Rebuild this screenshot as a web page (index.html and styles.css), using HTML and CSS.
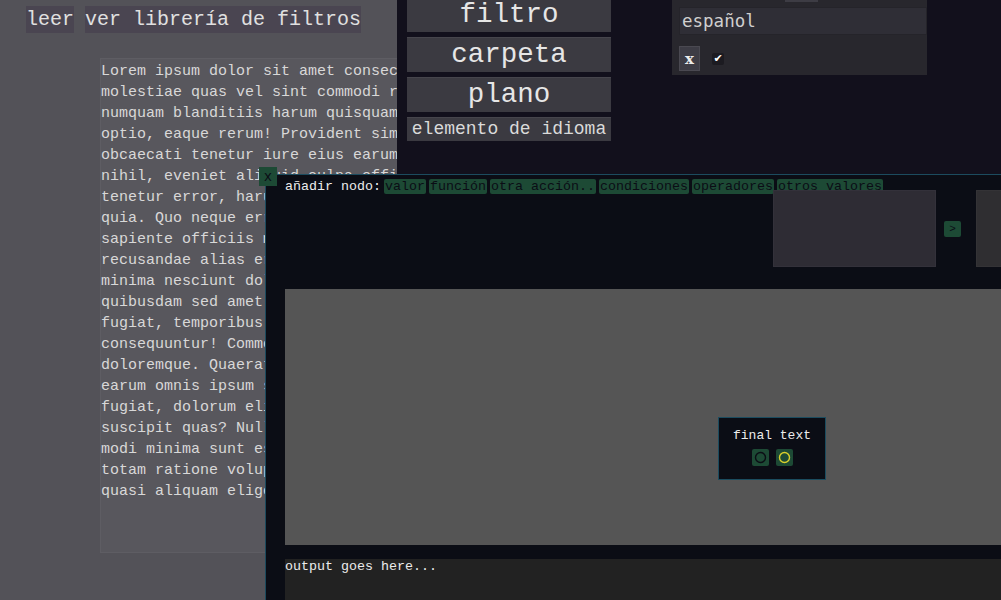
FILE: index.html
```html
<!DOCTYPE html>
<html lang="es">
<head>
<meta charset="utf-8">
<title>Editor</title>
<link rel="stylesheet" href="styles.css">
</head>
<body>
<div class="app">
  <section class="left">
    <div class="topbar">
      <button class="tbtn">leer</button>
      <button class="tbtn">ver librería de filtros</button>
    </div>
    <div class="lorem">Lorem ipsum dolor sit amet consectetur adipisicing elit. Maxime mollitia,
molestiae quas vel sint commodi repudiandae consequuntur voluptatum laborum
numquam blanditiis harum quisquam eius sed odit fugiat iusto fuga praesentium
optio, eaque rerum! Provident similique accusantium nemo autem. Veritatis
obcaecati tenetur iure eius earum ut molestias architecto voluptate aliquam
nihil, eveniet aliquid culpa officia aut! Impedit sit sunt quaerat, odit,
tenetur error, harum nesciunt ipsum debitis quas aliquid. Reprehenderit,
quia. Quo neque error repudiandae fuga? Ipsa laudantium molestias eos
sapiente officiis modi at sunt excepturi expedita sint? Sed quibusdam
recusandae alias error harum maxime adipisci amet laborum. Perspiciatis
minima nesciunt dolorem! Officiis iure rerum voluptates a cumque velit
quibusdam sed amet tempora. Sit laborum ab, eius fugit doloribus tenetur
fugiat, temporibus enim commodi iusto libero magni deleniti quod quam
consequuntur! Commodi minima excepturi repudiandae velit hic maxime
doloremque. Quaerat provident commodi consectetur veniam similique ad
earum omnis ipsum saepe, voluptas, hic voluptates pariatur est explicabo
fugiat, dolorum eligendi quam cupiditate excepturi mollitia maiores labore
suscipit quas? Nulla, placeat. Voluptatem quaerat non architecto ab
modi minima sunt esse temporibus sint culpa, recusandae aliquam numquam
totam ratione voluptas quod exercitationem fuga. Possimus quis earum veniam
quasi aliquam eligendi, placeat qui corporis!</div>
  </section>
  <section class="right">
    <div class="menu">
      <button class="mbtn">filtro</button>
      <button class="mbtn">carpeta</button>
      <button class="mbtn">plano</button>
      <button class="mbtn small">elemento de idioma</button>
    </div>
    <div class="langpanel">
      <div class="tab"></div>
      <div class="langinput">español</div>
      <div class="langrow">
        <button class="xbtn">x</button>
        <span class="check">✔</span>
      </div>
    </div>
  </section>
</div>

<div class="editor">
  <button class="close">x</button>
  <div class="toolbar">
    <span class="label">añadir nodo:</span>
    <button class="nbtn">valor</button>
    <button class="nbtn">función</button>
    <button class="nbtn">otra acción..</button>
    <button class="nbtn">condiciones</button>
    <button class="nbtn">operadores</button>
    <button class="nbtn">otros valores</button>
  </div>
  <div class="panels">
    <div class="pbox"></div>
    <button class="next">&gt;</button>
    <div class="pbox alt"></div>
  </div>
  <div class="canvas">
    <div class="node">
      <div class="node-title">final text</div>
      <div class="ports">
        <span class="port"><svg width="13" height="13" viewBox="0 0 13 13"><circle cx="6.5" cy="6.5" r="5" fill="none" stroke="#0b0d15" stroke-width="1.4"/></svg></span>
        <span class="port"><svg width="13" height="13" viewBox="0 0 13 13"><circle cx="6.5" cy="6.5" r="5" fill="none" stroke="#d9cf2c" stroke-width="1.4"/></svg></span>
      </div>
    </div>
  </div>
  <div class="output">output goes here...</div>
</div>
</body>
</html>
```

FILE: styles.css
```css
html, body {
  margin: 0;
  padding: 0;
}
body {
  width: 1001px;
  height: 600px;
  overflow: hidden;
  position: relative;
  background: #12101c;
  font-family: "Liberation Mono", monospace;
}
button {
  border: 0;
  margin: 0;
  padding: 0;
  font-family: "Liberation Mono", monospace;
  cursor: pointer;
}
.app {
  display: flex;
  height: 600px;
}

/* left panel */
.left {
  width: 397px;
  flex: none;
  background: #535258;
  padding-top: 6px;
  box-sizing: border-box;
  overflow: hidden;
}
.topbar {
  display: flex;
  gap: 11px;
  margin-left: 26px;
}
.tbtn {
  height: 27px;
  line-height: 27px;
  font-size: 20px;
  background: #4a4551;
  color: #e0e0e0;
  white-space: nowrap;
}
.lorem {
  margin-top: 25px;
  margin-left: 100px;
  width: 700px;
  height: 495px;
  box-sizing: border-box;
  border: 1px solid #5e5d63;
  background: #58575d;
  padding-top: 2px;
  font-size: 15px;
  line-height: 21px;
  color: #d8d8d8;
  white-space: pre;
}

/* right area */
.right {
  flex: 1;
  display: flex;
  align-items: flex-start;
  gap: 61px;
  padding-left: 10px;
  background: #12101c;
}
.menu {
  width: 204px;
  flex: none;
  display: flex;
  flex-direction: column;
  gap: 5px;
  margin-top: -3px;
}
.mbtn {
  height: 35px;
  line-height: 35px;
  font-size: 27.5px;
  background: #3b3a41;
  color: #e6e6e6;
  box-shadow: inset 0 1px 0 #46454c;
}
.mbtn.small {
  height: 24px;
  line-height: 24px;
  font-size: 18px;
  color: #dadada;
}
.langpanel {
  width: 255px;
  flex: none;
  background: #28272d;
  padding: 0 0 4px 7px;
  box-sizing: border-box;
}
.tab {
  margin-left: 106px;
  width: 33px;
  height: 2px;
  background: #3d3c44;
}
.langinput {
  margin-top: 5px;
  height: 28px;
  box-sizing: border-box;
  border: 1px solid #25242a;
  background: #2f2e36;
  padding-left: 2px;
  font-family: "DejaVu Sans Mono", monospace;
  font-size: 17.5px;
  line-height: 26px;
  color: #cfcfcf;
}
.langrow {
  margin-top: 11px;
  display: flex;
  align-items: center;
  gap: 12px;
}
.xbtn {
  width: 21px;
  height: 25px;
  box-sizing: border-box;
  border: 1px solid #4a4951;
  background: #3d3c45;
  color: #ececec;
  font-family: "DejaVu Serif", serif;
  font-weight: bold;
  font-size: 15px;
  line-height: 22px;
}
.check {
  width: 12px;
  height: 12px;
  border-radius: 2px;
  background: #1c1b21;
  color: #ffffff;
  font-family: "DejaVu Sans", sans-serif;
  font-size: 11px;
  line-height: 11px;
  text-align: center;
}

/* node editor window */
.editor {
  position: absolute;
  left: 265px;
  top: 174px;
  width: 760px;
  height: 440px;
  box-sizing: border-box;
  background: #0b0d15;
  border: 1px solid #1c4b5e;
  padding: 4px 0 0 19px;
}
.close {
  position: absolute;
  left: -7px;
  top: -8px;
  width: 18px;
  height: 19px;
  background: #1d4a35;
  color: #0b0d15;
  font-size: 14px;
  line-height: 18px;
}
.toolbar {
  display: flex;
  gap: 3px;
  height: 15px;
  align-items: center;
}
.label {
  font-size: 13.33px;
  line-height: 15px;
  color: #ececec;
  white-space: nowrap;
}
.nbtn {
  flex: none;
  height: 15px;
  padding: 0 1px;
  border-radius: 2px;
  background: #1d4a35;
  color: #0b0d15;
  font-size: 13.33px;
  line-height: 15px;
  white-space: nowrap;
}
.panels {
  position: relative;
  margin-top: -4px;
  margin-left: 488px;
  display: flex;
  align-items: center;
  height: 77px;
}
.pbox {
  flex: none;
  width: 163px;
  height: 77px;
  box-sizing: border-box;
  background: #2e2c34;
  border: 1px solid #33313a;
}
.pbox.alt {
  background: #2f2e31;
  border-color: #343336;
}
.next {
  flex: none;
  width: 17px;
  height: 16px;
  margin: 0 15px 0 8px;
  border-radius: 2px;
  background: #1d4a35;
  color: #0b0d15;
  font-size: 11px;
  line-height: 16px;
}
.canvas {
  position: relative;
  margin-top: 22px;
  width: 740px;
  height: 256px;
  background: #555555;
}
.node {
  position: absolute;
  left: 433px;
  top: 128px;
  width: 108px;
  height: 63px;
  box-sizing: border-box;
  background: #0b0d15;
  border: 1px solid #1b4c5f;
  padding-top: 10px;
}
.node-title {
  text-align: center;
  font-size: 13px;
  line-height: 15px;
  color: #ececec;
}
.ports {
  margin-top: 6px;
  display: flex;
  justify-content: center;
  gap: 7px;
}
.port {
  width: 17px;
  height: 17px;
  border-radius: 2px;
  background: #1d4a35;
  display: flex;
  align-items: center;
  justify-content: center;
}
.output {
  margin-top: 14px;
  width: 740px;
  height: 60px;
  background: #222222;
  font-size: 13.33px;
  line-height: 15px;
  color: #ececec;
}
```
